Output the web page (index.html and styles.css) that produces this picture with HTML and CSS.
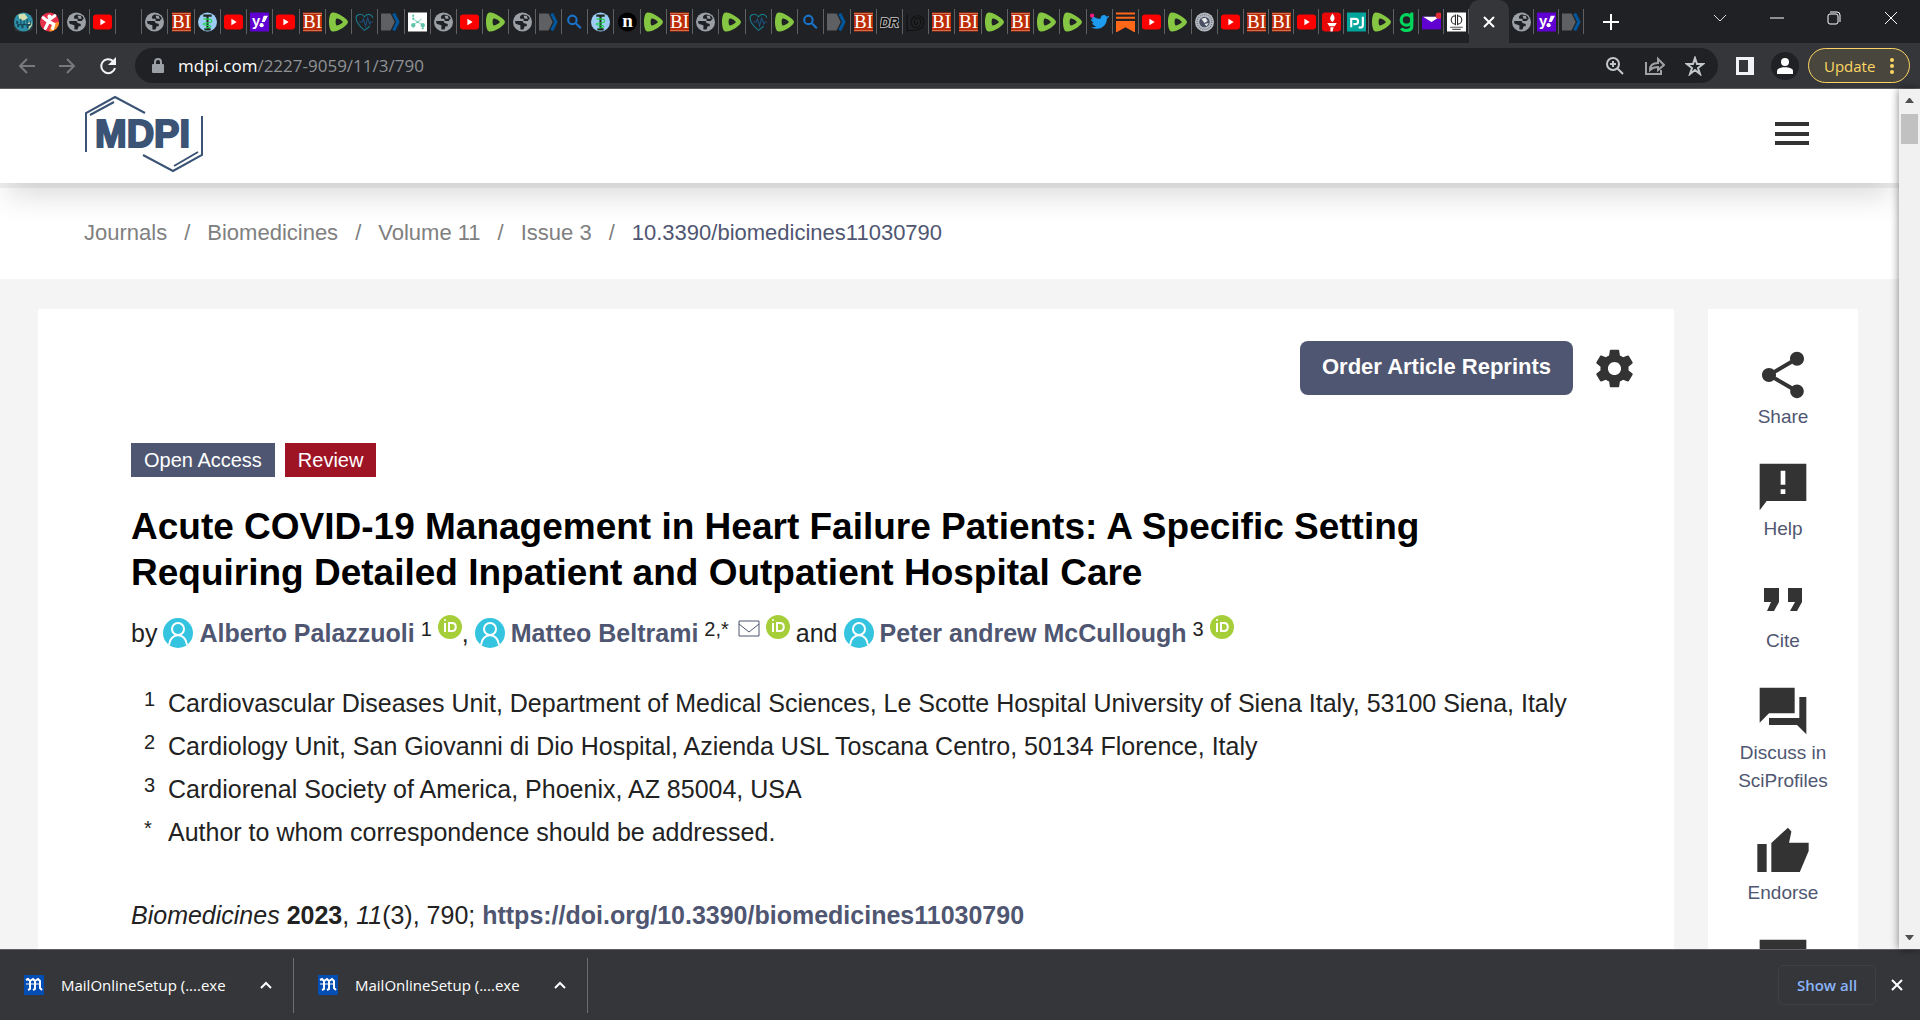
FILE: index.html
```
<!DOCTYPE html>
<html lang="en">
<head>
  <meta charset="UTF-8">
  <title>Acute COVID-19 Management in Heart Failure Patients</title>
  <link rel="stylesheet" href="styles.css">
</head>
<body>
  <svg class="sprite" aria-hidden="true">
    <symbol id="city" viewBox="0 0 18 18">
      <rect width="18" height="16" y="2" rx="4" fill="#2d3436"/>
      <circle cx="9" cy="9" r="9" fill="#2c91a8"/>
      <path d="M4 2l6-1 3 4-4 3-4-2zM12 11l4-3 1 4-3 4z" fill="#d5dfb0"/>
      <path d="M1 10h1V8h2v3h2V6h1v5h2V7h1v4h2V6h1v5h2V8h1v4l-2 1v2h-2v-3H9v3H7v-3H5v2H3v-3z" fill="#164b5d"/>
    </symbol>
    <symbol id="runner" viewBox="0 0 18 18">
      <circle cx="9" cy="9" r="9" fill="#e8304a"/>
      <path d="M9 18a9 9 0 0 0 9-9c-5 0-9 4-9 9z" fill="#ff9326"/>
      <circle cx="9" cy="4" r="2" fill="#fff"/>
      <path d="M3 5l4 3 7-5M8 9l-3 6M9 9l4 2-1 4" fill="none" stroke="#fff" stroke-width="3" stroke-linecap="round"/>
    </symbol>
    <symbol id="globe" viewBox="0 0 18 18">
      <circle cx="9" cy="9" r="9" fill="#9aa0a6"/>
      <path d="M9 2c-2 1-3 2-2 4h3v2h4c1-1 1-2 2-2l-1-2c-1-1-3-2-6-2zM2 8c0 1 0 2 1 3l4 1v4h3l1-3h2v-2l-3-1-1-2H5z" fill="#202124"/>
      <path d="M10 3h3l1 3h-3z" fill="#9aa0a6"/>
    </symbol>
    <symbol id="youtube" viewBox="0 0 18 18">
      <rect y="2" width="18" height="14" rx="3" fill="#f00"/>
      <path d="M7 6v6l5-3z" fill="#fff"/>
    </symbol>
    <symbol id="bi" viewBox="0 0 18 18">
      <rect width="18" height="18" fill="#bd2d05"/>
      <path d="M0 1h18M0 17h18" stroke="#d0704f"/>
      <text x="9" y="15" text-anchor="middle" font-family="Liberation Serif, serif" font-size="18" fill="#fff">BI</text>
    </symbol>
    <symbol id="medic" viewBox="0 0 18 18">
      <circle cx="9" cy="9" r="9" fill="#9ccbf5"/>
      <path d="M5 3h8M9 3v14M6 16h6" stroke="#1d2b22" stroke-width="2"/>
      <path d="M5 6c3 1 8-1 8 2s-8 1-8 3 7 0 7 2-4 1-5 2" fill="none" stroke="#19d73c"/>
    </symbol>
    <symbol id="yahoo" viewBox="0 0 18 18">
      <rect width="18" height="18" fill="#6001d2"/>
      <text x="2" y="13" font-family="Liberation Sans, sans-serif" font-weight="bold" font-size="14" fill="#fff">y</text>
      <path d="M13 3h4l-3 6h-3z" fill="#fff"/><circle cx="11" cy="12" r="2" fill="#fff"/>
    </symbol>
    <symbol id="rumble" viewBox="0 0 18 18">
      <path d="M3 0C7-1 18 6 18 9s-10 10-15 9c-4-1-4-17 0-18z" fill="#85c742"/>
      <path d="M7 6c1-1 6 2 6 3s-5 4-6 3-1-5 0-6z" fill="#202124"/>
    </symbol>
    <symbol id="heart" viewBox="0 0 18 18">
      <path d="M9 17C3 12 1 8 1 5s5-5 8-1c3-4 7-2 8 1M9 17l5-4" fill="none" stroke="#187e91"/>
      <path d="M4 9h3l1-3 2 7 2-8 2 6 1-2h2" fill="none" stroke="#1d4f7c"/>
    </symbol>
    <symbol id="tag" viewBox="0 0 18 18">
      <path d="M0 1h9l4 8-4 8H0z" fill="#5f6063"/>
      <path d="M12 1l4 8-4 8" fill="none" stroke="#02569b" stroke-width="3"/>
    </symbol>
    <symbol id="molecule" viewBox="0 0 18 18">
      <rect width="18" height="18" fill="#fff"/>
      <path d="M5 3v3l4 3-4 3v3M9 9l5 3v3M9 9l4-3" fill="none" stroke="#9ed8cf"/>
      <g fill="#5fc3a9"><circle cx="5" cy="3" r="1"/><circle cx="5" cy="6" r="1"/><circle cx="9" cy="9" r="1"/><circle cx="5" cy="12" r="2"/><circle cx="14" cy="12" r="2"/><circle cx="14" cy="15" r="1"/></g>
    </symbol>
    <symbol id="search" viewBox="0 0 18 18">
      <circle cx="7" cy="7" r="4" fill="none" stroke="#1a73c8" stroke-width="2"/>
      <path d="M10 10l5 5" stroke="#1a73c8" stroke-width="2"/>
    </symbol>
    <symbol id="n" viewBox="0 0 18 18">
      <circle cx="9" cy="9" r="9"/>
      <text x="9" y="14" text-anchor="middle" font-family="Liberation Serif, serif" font-weight="bold" font-size="18" fill="#fff">n</text>
    </symbol>
    <symbol id="dr" viewBox="0 0 18 18">
      <text x="9" y="14" text-anchor="middle" font-family="Liberation Sans, sans-serif" font-weight="bold" font-style="italic" font-size="12" fill="#080808" stroke="#b0b0b0" stroke-width="2" paint-order="stroke">DR</text>
    </symbol>
    <symbol id="spiral" viewBox="0 0 18 18">
      <path d="M1 2v16M0 17c8 0 17 0 17-8s-12-8-12 0 9 6 9 0-6-4-6 0 3 3 3 0" fill="none" stroke="#111"/>
    </symbol>
    <symbol id="twitter" viewBox="0 0 18 18">
      <path d="M18 4l-2 2c0 7-7 12-15 8 2 0 4 0 5-1-2 0-3-1-4-3h2C2 9 1 8 1 6l2 1C1 5 1 3 2 2c2 3 4 4 8 4 0-4 4-5 6-2l2-1z" fill="#1d9bf0"/>
      <circle cx="2" cy="3" r="2" fill="#f91880"/>
    </symbol>
    <symbol id="substack" viewBox="0 0 18 18">
      <path d="M0 0h18v2H0zM0 4h18v2H0zM0 8h18v11l-9-5-9 5z" fill="#ff6719"/>
    </symbol>
    <symbol id="seal" viewBox="0 0 18 18">
      <circle cx="9" cy="9" r="9" fill="#b7bcc4"/>
      <circle cx="9" cy="9" r="7" fill="none" stroke="#60656f" stroke-dasharray="1 1"/>
      <circle cx="9" cy="9" r="5" fill="#4a5063"/>
      <path d="M6 6l4-1 2 3-3 2zM9 11l4-1-2 3z" fill="#e8e9ec"/>
    </symbol>
    <symbol id="torch" viewBox="0 0 18 18">
      <rect width="18" height="18" rx="3" fill="#e90808"/>
      <path d="M10 1c2 3 3 5 0 8-3-2-3-4 0-8zM5 10h9l-2 3H7zM8 14h3l-1 4H8z" fill="#fff"/>
    </symbol>
    <symbol id="pj" viewBox="0 0 18 18">
      <rect width="18" height="18" fill="#00a59b"/>
      <path d="M4 14V6h4a2 2 0 0 1 0 5H6M15 4v8q0 3-4 2" fill="none" stroke="#fff" stroke-width="2"/>
    </symbol>
    <symbol id="g" viewBox="0 0 18 18">
      <circle cx="9" cy="7" r="5" fill="none" stroke="#00d65b" stroke-width="3"/>
      <path d="M14 0v13c0 5-8 5-10 2" fill="none" stroke="#00d65b" stroke-width="3"/>
    </symbol>
    <symbol id="mail" viewBox="0 0 18 18">
      <rect y="4" width="18" height="12" fill="#6001d2"/>
      <path d="M1 4h16l-8 5z" fill="#fff"/><circle cx="16" cy="3" r="3" fill="#e02a35"/>
    </symbol>
    <symbol id="cd" viewBox="0 0 18 18">
      <rect width="18" height="18" fill="#fff"/>
      <path d="M8 3a4 4 0 1 0 0 8M8 2v10M10 2v10M10 3a4 4 0 1 1 0 8" fill="none" stroke="#222"/>
      <path d="M3 14h12M5 16h8" stroke="#555"/>
    </symbol>
    <symbol id="user" viewBox="0 0 30 30">
      <circle cx="15" cy="15" r="15" fill="#35c4e0"/>
      <circle cx="15" cy="11" r="6" fill="none" stroke="#fff" stroke-width="2"/>
      <path d="M6 27c1-13 17-13 18 0" fill="none" stroke="#fff" stroke-width="2"/>
    </symbol>
    <symbol id="orcid" viewBox="0 0 24 24">
      <circle cx="12" cy="12" r="12" fill="#a6ce39"/>
      <path d="M7 8v9M11 8v8h3c5 0 5-8 0-8z" fill="none" stroke="#fff" stroke-width="2"/>
      <circle cx="7" cy="5" r="1" fill="#fff"/>
    </symbol>
    <symbol id="daily" viewBox="0 0 20 20">
      <rect width="20" height="20" fill="#004db3"/>
      <path d="M2 5l2-1 2 2v8l-2 1M6 6l3-2 2 2v8l-2 1M11 6l3-2 2 2v7l2 2" fill="none" stroke="#fff" stroke-width="2"/>
      <path d="M2 9h14" stroke="#fff"/>
    </symbol>
  </svg>

  <div class="tabs">
    <div class="tab-group" data-icons="city runner globe youtube none globe bi medic youtube yahoo youtube bi rumble heart tag molecule globe youtube rumble globe tag search medic n rumble bi globe rumble heart rumble search tag bi dr spiral bi bi rumble bi rumble rumble twitter substack youtube rumble seal youtube"></div>
    <div class="tab-group narrow" data-icons="bi bi youtube torch pj rumble g mail cd"></div>
    <button class="tab-active" aria-label="Close tab"><svg width="12" height="12"><path d="M1 1l10 10M11 1L1 11" stroke="#fff" stroke-width="2"/></svg></button>
    <div class="tab-group narrow" data-icons="globe yahoo tag"></div>
    <button class="new-tab" aria-label="New tab"><svg width="16" height="16"><path d="M8 0v16M0 8h16" stroke="#fff" stroke-width="2"/></svg></button>
    <div class="window-controls">
      <button aria-label="Search tabs"><svg width="14" height="14"><path d="M1 4l6 6 6-6" fill="none" stroke="#ddd"/></svg></button>
      <button aria-label="Minimize"><svg width="14" height="14"><path d="M0 7h14" stroke="#fff"/></svg></button>
      <button aria-label="Restore"><svg width="14" height="14" fill="none" stroke="#fff"><rect x="1" y="3" width="10" height="10" rx="2"/><path d="M3 1h7q3 0 3 3v7"/></svg></button>
      <button aria-label="Close window"><svg width="14" height="14"><path d="M1 1l12 12M13 1L1 13" stroke="#fff"/></svg></button>
    </div>
  </div>

  <div class="toolbar">
    <div class="nav-buttons">
      <button aria-label="Back"><svg width="24" height="24" fill="none" stroke="#77797c" stroke-width="2"><path d="M20 12H5M12 5l-7 7 7 7"/></svg></button>
      <button aria-label="Forward"><svg width="24" height="24" fill="none" stroke="#77797c" stroke-width="2"><path d="M4 12h15M12 5l7 7-7 7"/></svg></button>
      <button aria-label="Reload"><svg width="24" height="24"><path d="M18 7a7 7 0 1 0 2 7" fill="none" stroke="#f1f3f4" stroke-width="2"/><path d="M21 3v8h-8z" fill="#f1f3f4"/></svg></button>
    </div>
    <div class="address">
      <svg class="lock" width="12" height="16"><path d="M3 6V4a3 3 0 0 1 6 0v2" fill="none" stroke="#9aa0a6" stroke-width="2"/><rect y="6" width="12" height="9" rx="1" fill="#9aa0a6"/></svg>
      <a class="url" href="#">mdpi.com<span>/2227-9059/11/3/790</span></a>
      <button aria-label="Zoom"><svg width="20" height="20" fill="none" stroke="#c4c7c9" stroke-width="2"><circle cx="8" cy="8" r="6"/><path d="M12 12l6 6M5 8h6M8 5v6"/></svg></button>
      <button aria-label="Share this page"><svg width="20" height="20" fill="none" stroke="#9fa1a4"><path d="M1 6v12h15v-4" stroke-width="2"/><path d="M5 14c0-5 3-7 8-7V3l6 6-6 5v-3c-4 0-6 1-8 3z" stroke-width="2"/></svg></button>
      <button aria-label="Bookmark"><svg width="20" height="20"><path d="M10 2l2 6h6l-5 4 2 6-5-4-5 4 2-6-5-4h6z" fill="none" stroke="#c4c7c9" stroke-width="2"/></svg></button>
    </div>
    <button class="panel" aria-label="Side panel"><svg width="18" height="18"><path d="M0 0h18v18H0zM3 3v12h9V3z" fill="#f1f3f4" fill-rule="evenodd"/></svg></button>
    <button class="avatar" aria-label="Profile"><svg width="18" height="18" fill="#fff"><circle cx="9" cy="5" r="4"/><path d="M1 17v-3c0-5 16-5 16 0v3z"/></svg></button>
    <button class="update">Update <svg width="4" height="18" fill="#fdd663"><circle cx="2" cy="3" r="2"/><circle cx="2" cy="9" r="2"/><circle cx="2" cy="15" r="2"/></svg></button>
  </div>

  <div class="viewport">
    <div class="page">
      <header class="header">
        <a href="#" aria-label="MDPI">
          <svg width="120" height="78" fill="none" stroke="#3b5375" stroke-width="2">
            <path d="M2 57V18L31 2l30 16M6 20l24-13M118 21v39L89 76 59 60M114 57L90 71"/>
            <text x="11" y="52" font-family="Liberation Sans, sans-serif" font-weight="bold" font-size="38" fill="#3b5375">MDPI</text>
          </svg>
        </a>
        <button aria-label="Menu"><svg width="34" height="24"><path d="M0 2h34M0 12h34M0 21h34" stroke="#333" stroke-width="4"/></svg></button>
      </header>

      <nav class="breadcrumb">
        <a href="#">Journals</a><span>/</span>
        <a href="#">Biomedicines</a><span>/</span>
        <a href="#">Volume 11</a><span>/</span>
        <a href="#">Issue 3</a><span>/</span>
        <a href="#" class="current">10.3390/biomedicines11030790</a>
      </nav>

      <main class="content">
        <article class="article">
          <div class="actions">
            <button class="reprints">Order Article Reprints</button>
            <button aria-label="Settings"><svg width="45" height="45" viewBox="0 0 24 24" fill="#333"><path d="M19.43 12.98c.04-.32.07-.64.07-.98s-.03-.66-.07-.98l2.11-1.65c.19-.15.24-.42.12-.64l-2-3.46c-.12-.22-.39-.3-.61-.22l-2.49 1c-.52-.4-1.08-.73-1.69-.98l-.38-2.65C14.46 2.18 14.25 2 14 2h-4c-.25 0-.46.18-.49.42l-.38 2.65c-.61.25-1.17.59-1.69.98l-2.49-1c-.23-.09-.49 0-.61.22l-2 3.46c-.13.22-.07.49.12.64l2.11 1.65c-.04.32-.07.65-.07.98s.03.66.07.98l-2.11 1.65c-.19.15-.24.42-.12.64l2 3.46c.12.22.39.3.61.22l2.49-1c.52.4 1.08.73 1.69.98l.38 2.65c.03.24.24.42.49.42h4c.25 0 .46-.18.49-.42l.38-2.65c.61-.25 1.17-.59 1.69-.98l2.49 1c.23.09.49 0 .61-.22l2-3.46c.12-.22.07-.49-.12-.64l-2.11-1.65zM12 15.5c-1.93 0-3.5-1.57-3.5-3.5s1.57-3.5 3.5-3.5 3.5 1.57 3.5 3.5-1.57 3.5-3.5 3.5z"/></svg></button>
          </div>

          <div class="badges">
            <span class="badge">Open Access</span>
            <span class="badge review">Review</span>
          </div>

          <h1>Acute COVID-19 Management in Heart Failure Patients: A Specific Setting Requiring Detailed Inpatient and Outpatient Hospital Care</h1>

          <div class="authors">
            <span>by</span>
            <svg class="user"><use href="#user"/></svg>
            <a href="#">Alberto Palazzuoli</a>
            <sup>1</sup>
            <svg class="orcid"><use href="#orcid"/></svg>
            <span class="comma">,</span>
            <svg class="user"><use href="#user"/></svg>
            <a href="#">Matteo Beltrami</a>
            <sup>2,*</sup>
            <svg class="envelope" viewBox="0 0 22 17"><path d="M1 1h20v15H1zM1 4l10 8 10-8" fill="none" stroke="#4f5671"/></svg>
            <svg class="orcid"><use href="#orcid"/></svg>
            <span>and</span>
            <svg class="user"><use href="#user"/></svg>
            <a href="#">Peter andrew McCullough</a>
            <sup>3</sup>
            <svg class="orcid"><use href="#orcid"/></svg>
          </div>

          <ul class="affiliations">
            <li><sup>1</sup>Cardiovascular Diseases Unit, Department of Medical Sciences, Le Scotte Hospital University of Siena Italy, 53100 Siena, Italy</li>
            <li><sup>2</sup>Cardiology Unit, San Giovanni di Dio Hospital, Azienda USL Toscana Centro, 50134 Florence, Italy</li>
            <li><sup>3</sup>Cardiorenal Society of America, Phoenix, AZ 85004, USA</li>
            <li><sup>*</sup>Author to whom correspondence should be addressed.</li>
          </ul>

          <p class="citation"><em>Biomedicines</em> <b>2023</b>, <em>11</em>(3), 790; <a href="#">https://doi.org/10.3390/biomedicines11030790</a></p>
        </article>

        <aside class="side">
          <a href="#"><svg viewBox="0 0 24 24"><path d="M18 16.08c-.76 0-1.44.3-1.96.77L8.91 12.7c.05-.23.09-.46.09-.7s-.04-.47-.09-.7l7.05-4.11c.54.5 1.25.81 2.04.81 1.66 0 3-1.34 3-3s-1.34-3-3-3-3 1.34-3 3c0 .24.04.47.09.7L8.04 9.81C7.5 9.31 6.79 9 6 9c-1.66 0-3 1.34-3 3s1.34 3 3 3c.79 0 1.5-.31 2.04-.81l7.12 4.16c-.05.21-.08.43-.08.65 0 1.61 1.31 2.92 2.92 2.92s2.92-1.31 2.92-2.92-1.31-2.92-2.92-2.92z"/></svg>Share</a>
          <a href="#"><svg viewBox="0 0 24 24"><path d="M2 2h20v16H5l-3 4zM11 5v6h2V5zm0 8v2h2v-2z" fill-rule="evenodd"/></svg>Help</a>
          <a href="#"><svg viewBox="0 0 56 56"><path d="M9 17h15v14l-5 9h-7l4-9H9zM33 17h14v14l-5 9h-7l5-9h-7z"/></svg>Cite</a>
          <a href="#"><svg viewBox="0 0 24 24"><path d="M22 6h-3v9H6v3h12l4 4zM17 2H2v15l4-4h11z"/></svg>Discuss in SciProfiles</a>
          <a href="#"><svg viewBox="0 0 24 24"><path d="M1 21h4V9H1zM23 8.5h-8.4l1-4.9-1.5-1.6L7 8.6V21h12.2L23 12z"/></svg>Endorse</a>
          <a href="#" aria-label="Comment"><svg viewBox="0 0 24 24"><path d="M2 2h20v16H5l-3 4z"/></svg></a>
        </aside>
      </main>
    </div>

    <div class="scrollbar">
      <svg width="9" height="5"><path d="M0 5l4-5h1l4 5z" fill="#505050"/></svg>
      <div class="thumb"></div>
      <svg width="9" height="5"><path d="M0 0l4 5h1l4-5z" fill="#505050"/></svg>
    </div>
  </div>

  <footer class="downloads">
    <button class="download"><svg width="20" height="20"><use href="#daily"/></svg><span>MailOnlineSetup (....exe</span><svg width="12" height="12"><path d="M1 9l5-5 5 5" fill="none" stroke="#fff" stroke-width="2"/></svg></button>
    <button class="download"><svg width="20" height="20"><use href="#daily"/></svg><span>MailOnlineSetup (....exe</span><svg width="12" height="12"><path d="M1 9l5-5 5 5" fill="none" stroke="#fff" stroke-width="2"/></svg></button>
    <button class="show-all">Show all</button>
    <button class="close" aria-label="Close downloads"><svg width="12" height="12"><path d="M1 1l10 10M11 1L1 11" stroke="#fff" stroke-width="2"/></svg></button>
  </footer>

  <script>
    const groups = document.querySelectorAll('.tab-group');
    groups.forEach((group) => {
      group.innerHTML = group.dataset.icons.split(' ').map((icon) =>
        `<button class="tab" aria-label="${icon} tab"><svg width="19" height="20"><use href="#${icon}"/></svg></button>`
      ).join('');
    });
  </script>
</body>
</html>
```
FILE: styles.css
```
* {
  box-sizing: border-box;
}
body {
  margin: 0;
  height: 100vh;
  display: flex;
  flex-direction: column;
  overflow: hidden;
  font-family: "Liberation Sans", Arial, sans-serif;
  color: #222;
}
button {
  border: 0;
  padding: 0;
  background: none;
  font: inherit;
  color: inherit;
}
a {
  color: #4f5671;
  text-decoration: none;
}
button svg {
  display: block;
}
.sprite {
  display: none;
}

/* browser tabs */
.tabs {
  display: flex;
  height: 43px;
  flex-shrink: 0;
  padding-left: 11px;
  background: #202124;
}
.tab-group {
  display: flex;
  width: 1233px;
  align-items: center;
}
.tab-group.narrow {
  width: auto;
}
.tab {
  flex: 1;
  height: 25px;
  display: flex;
  align-items: center;
  justify-content: center;
  border-right: 1px solid #5f6063;
}
.narrow .tab {
  flex: 0 0 25px;
}
.tab-active {
  width: 40px;
  display: flex;
  align-items: center;
  justify-content: center;
  background: #35363a;
  border-radius: 10px 10px 0 0;
}
.new-tab {
  margin-left: 19px;
}
.window-controls {
  display: flex;
  gap: 43px;
  height: 36px;
  margin-left: auto;
  padding-right: 22px;
}

/* toolbar */
.toolbar {
  display: flex;
  align-items: center;
  height: 46px;
  flex-shrink: 0;
  padding: 0 10px 0 15px;
  background: #35363a;
  border-bottom: 1px solid #5f6063;
  font-family: "Open Sans", "Noto Sans", sans-serif;
}
.nav-buttons {
  display: flex;
  gap: 16px;
  margin-right: 16px;
}
.address {
  flex: 1;
  display: flex;
  align-items: center;
  gap: 20px;
  height: 35px;
  padding: 0 13px 0 17px;
  border-radius: 18px;
  background: #202124;
}
.url {
  flex: 1;
  margin-left: -6px;
  font-size: 17px;
  color: #fff;
}
.url span {
  color: #8f9296;
}
.panel {
  margin: 0 17px 0 18px;
}
.avatar {
  display: flex;
  align-items: center;
  justify-content: center;
  width: 28px;
  height: 28px;
  margin-right: 9px;
  border-radius: 50%;
  background: #202124;
}
.update {
  display: flex;
  align-items: center;
  justify-content: space-between;
  width: 102px;
  height: 35px;
  padding: 0 15px;
  border: 1px solid #fdd663;
  border-radius: 18px;
  background: #49463d;
  color: #fdd663;
  font-size: 15px;
}

/* page */
.viewport {
  flex: 1;
  min-height: 0;
  display: flex;
}
.page {
  flex: 1;
  overflow: hidden;
  background: #f4f4f4;
}
.header {
  position: relative;
  display: flex;
  align-items: center;
  justify-content: space-between;
  height: 94px;
  padding: 0 90px 4px 84px;
  background: #fff;
  box-shadow: 0 5px 0 rgba(0, 0, 0, 0.05), 0 20px 30px -8px rgba(0, 0, 0, 0.15);
}
.header svg {
  display: block;
}
.breadcrumb {
  display: flex;
  gap: 17px;
  height: 96px;
  padding: 36px 84px 0;
  background: #fff;
  font-size: 22px;
  line-height: 28px;
}
.breadcrumb a,
.breadcrumb span {
  color: #808080;
}
.breadcrumb .current {
  color: #4f5671;
}
.content {
  display: flex;
  align-items: flex-start;
  gap: 34px;
  padding: 30px 41px 0 38px;
}
.article {
  flex: 1;
  padding: 32px 37px 40px 93px;
  background: #fff;
}
.actions {
  display: flex;
  justify-content: flex-end;
  align-items: center;
  gap: 19px;
}
.reprints {
  height: 54px;
  padding: 0 22px 2px;
  border-radius: 8px;
  background: #4f5671;
  color: #fff;
  font-size: 22px;
  font-weight: bold;
}
.badges {
  display: flex;
  gap: 10px;
  margin-top: 48px;
}
.badge {
  padding: 0 13px;
  background: #4f5671;
  color: #fff;
  font-size: 20px;
  line-height: 34px;
}
.badge.review {
  background: #9e1425;
}
h1 {
  max-width: 1400px;
  margin: 27px 0 0;
  color: #000;
  font-size: 37px;
  line-height: 46px;
}
.authors {
  display: flex;
  align-items: center;
  gap: 6px;
  height: 40px;
  margin-top: 17px;
  font-size: 25px;
}
.authors a,
.citation a {
  font-weight: bold;
}
sup {
  font-size: 20px;
  line-height: 20px;
}
.authors sup {
  padding-bottom: 8px;
}
.comma {
  margin-left: -6px;
}
.user {
  width: 30px;
  height: 30px;
}
.orcid {
  width: 24px;
  height: 24px;
  margin-bottom: 13px;
}
.envelope {
  width: 22px;
  height: 17px;
  margin: 0 0 10px 3px;
}
.affiliations {
  margin: 29px 0 0;
  padding: 0;
  list-style: none;
  font-size: 25px;
  line-height: 43px;
}
.affiliations li {
  display: flex;
}
.affiliations sup {
  width: 24px;
  margin-left: 13px;
  padding-top: 7px;
}
.citation {
  margin: 40px 0 0;
  font-size: 25px;
  line-height: 43px;
}
.side {
  width: 150px;
  display: flex;
  flex-direction: column;
  gap: 28px;
  padding: 38px 20px;
  background: #fff;
}
.side a {
  display: flex;
  flex-direction: column;
  align-items: center;
  text-align: center;
  font-size: 19px;
  line-height: 28px;
}
.side svg {
  width: 56px;
  height: 56px;
  fill: #333;
}
.scrollbar {
  position: relative;
  width: 21px;
  display: flex;
  flex-direction: column;
  align-items: center;
  padding: 9px 0;
  background: #f1f1f1;
  box-shadow: 0 0 8px rgba(0, 0, 0, 0.5);
}
.thumb {
  width: 17px;
  height: 30px;
  margin: 11px 0 auto;
  background: #c1c1c1;
}

/* downloads bar */
.downloads {
  display: flex;
  align-items: center;
  height: 71px;
  flex-shrink: 0;
  padding-right: 17px;
  background: #35363a;
  border-top: 1px solid #5f6063;
  color: #fff;
  font-family: "Open Sans", "Noto Sans", sans-serif;
  font-size: 15px;
}
.download {
  display: flex;
  align-items: center;
  width: 294px;
  height: 55px;
  padding: 0 21px 0 24px;
  border-right: 1px solid #6d6e71;
}
.download span {
  flex: 1;
  margin-left: 17px;
  text-align: left;
}
.show-all {
  width: 98px;
  height: 40px;
  margin-left: auto;
  border: 1px solid #3f4044;
  border-radius: 5px;
  color: #8ab4f8;
  font-weight: 600;
}
.close {
  margin-left: 15px;
}
```
